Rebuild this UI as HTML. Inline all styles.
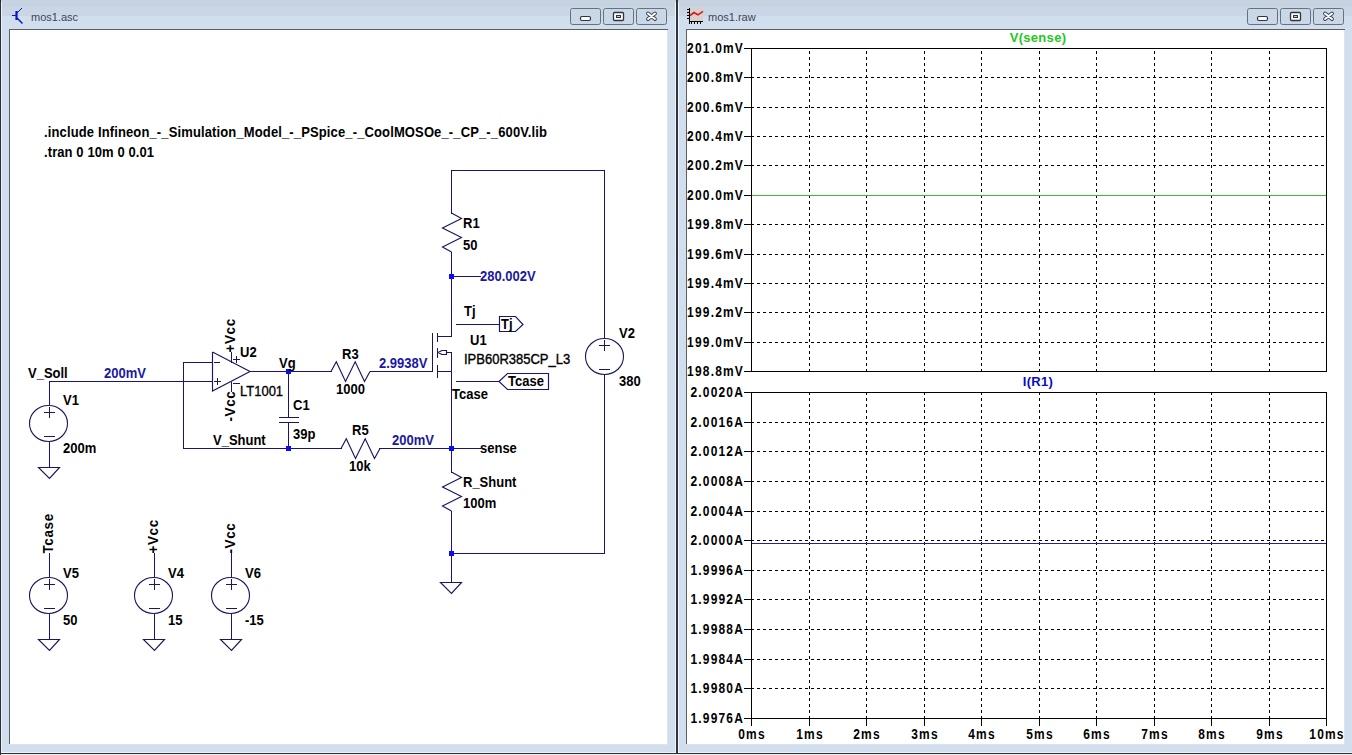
<!DOCTYPE html>
<html><head><meta charset="utf-8"><style>
html,body{margin:0;padding:0;background:#d0dcea;overflow:hidden}
svg{display:block}
text{font-family:'Liberation Sans', sans-serif}
</style></head><body>
<svg width="1352" height="755" viewBox="0 0 1352 755">
<defs><linearGradient id="fr" x1="0" y1="0" x2="0" y2="1"><stop offset="0" stop-color="#c6d1de"/><stop offset="0.25" stop-color="#c9d5e3"/><stop offset="0.55" stop-color="#cedae9"/><stop offset="1" stop-color="#d7e4f2"/></linearGradient></defs>
<rect x="0" y="0" width="1352" height="755" fill="#d1deed"/>
<rect x="0" y="0" width="1352" height="7" fill="#c8d3e1"/>
<rect x="0" y="7" width="1352" height="9" fill="#cad6e5"/>
<rect x="0" y="16" width="1352" height="13" fill="#d1deed"/>
<rect x="1" y="752" width="1351" height="1" fill="#eef4fa"/>
<rect x="0" y="754" width="1352" height="1" fill="#eceef2"/>
<rect x="1" y="2" width="1" height="751" fill="#eef4fa"/>
<rect x="675" y="2" width="1" height="751" fill="#eef4fa"/>
<rect x="678" y="2" width="1" height="751" fill="#eef4fa"/>
<rect x="0" y="0" width="1" height="755" fill="#2a2e36"/>
<rect x="676" y="0" width="2" height="754" fill="#2f333b"/>
<rect x="0" y="753" width="1352" height="1" fill="#2f333b"/>
<rect x="10" y="30" width="657" height="714" fill="#ffffff"/>
<rect x="9" y="29" width="659" height="1" fill="#5a5f66"/>
<rect x="9" y="29" width="1" height="715" fill="#5a5f66"/>
<rect x="667" y="30" width="1" height="715" fill="#dde3ea"/>
<rect x="9" y="744" width="659" height="1" fill="#dde3ea"/>
<rect x="687" y="30" width="657" height="714" fill="#ffffff"/>
<rect x="686" y="29" width="659" height="1" fill="#5a5f66"/>
<rect x="686" y="29" width="1" height="715" fill="#5a5f66"/>
<rect x="1344" y="30" width="1" height="715" fill="#dde3ea"/>
<rect x="686" y="744" width="659" height="1" fill="#dde3ea"/>
<rect x="570.5" y="8.5" width="30" height="16" rx="2" ry="2" fill="#cad7e7" stroke="#66717f" stroke-width="1"/>
<rect x="603.5" y="8.5" width="30" height="16" rx="2" ry="2" fill="#cad7e7" stroke="#66717f" stroke-width="1"/>
<rect x="636.5" y="8.5" width="30" height="16" rx="2" ry="2" fill="#cad7e7" stroke="#66717f" stroke-width="1"/>
<rect x="580.5" y="16.5" width="10" height="4" rx="1.5" fill="#ffffff" stroke="#2e3440" stroke-width="1.2"/>
<rect x="613.5" y="12.5" width="10" height="8" rx="1" fill="#ffffff" stroke="#2e3440" stroke-width="1.3"/>
<rect x="616.5" y="15.5" width="4" height="2" fill="#c8ccd2" stroke="#2e3440" stroke-width="1"/>
<path d="M648,13.5 L655,19 M655,13.5 L648,19" stroke="#3a4250" stroke-width="3.8" stroke-linecap="round"/>
<path d="M648,13.5 L655,19 M655,13.5 L648,19" stroke="#ffffff" stroke-width="2" stroke-linecap="round"/>
<rect x="1247.5" y="8.5" width="30" height="16" rx="2" ry="2" fill="#cad7e7" stroke="#66717f" stroke-width="1"/>
<rect x="1280.5" y="8.5" width="30" height="16" rx="2" ry="2" fill="#cad7e7" stroke="#66717f" stroke-width="1"/>
<rect x="1313.5" y="8.5" width="30" height="16" rx="2" ry="2" fill="#cad7e7" stroke="#66717f" stroke-width="1"/>
<rect x="1257.5" y="16.5" width="10" height="4" rx="1.5" fill="#ffffff" stroke="#2e3440" stroke-width="1.2"/>
<rect x="1290.5" y="12.5" width="10" height="8" rx="1" fill="#ffffff" stroke="#2e3440" stroke-width="1.3"/>
<rect x="1293.5" y="15.5" width="4" height="2" fill="#c8ccd2" stroke="#2e3440" stroke-width="1"/>
<path d="M1325,13.5 L1332,19 M1332,13.5 L1325,19" stroke="#3a4250" stroke-width="3.8" stroke-linecap="round"/>
<path d="M1325,13.5 L1332,19 M1332,13.5 L1325,19" stroke="#ffffff" stroke-width="2" stroke-linecap="round"/>
<g stroke="#0a14c8" fill="none"><path d="M12,15.5 L16,15.5" stroke-width="1"/><path d="M16.5,11 L16.5,20" stroke-width="2.2"/><path d="M17,13 L22,8" stroke-width="1"/><path d="M17,18 L22.5,23.5" stroke-width="1.4"/></g>
<text x="31" y="20.5" font-size="11" font-weight="normal" fill="#3a4656" text-anchor="start" >mos1.asc</text>
<rect x="690" y="8" width="13" height="13" fill="#d8d0cc"/>
<path d="M690,15.5 L694,12.5 L698,14.8 L703,11.3" stroke="#e01818" stroke-width="1.6" fill="none"/>
<rect x="689" y="8" width="1" height="16" fill="#000"/>
<rect x="689" y="21" width="14" height="1" fill="#000"/>
<rect x="687" y="9" width="2" height="1" fill="#000"/>
<rect x="687" y="12" width="2" height="1" fill="#000"/>
<rect x="687" y="15" width="2" height="1" fill="#000"/>
<rect x="687" y="18" width="2" height="1" fill="#000"/>
<rect x="691" y="22" width="1" height="2" fill="#000"/>
<rect x="694" y="22" width="1" height="2" fill="#000"/>
<rect x="697" y="22" width="1" height="2" fill="#000"/>
<rect x="700" y="22" width="1" height="2" fill="#000"/>
<text x="708" y="20.5" font-size="11" font-weight="normal" fill="#3a4656" text-anchor="start" >mos1.raw</text>
<path d="M809.5,51 L809.5,371" stroke="#000" stroke-width="1" stroke-dasharray="3,3"/>
<path d="M866.5,51 L866.5,371" stroke="#000" stroke-width="1" stroke-dasharray="3,3"/>
<path d="M924.5,51 L924.5,371" stroke="#000" stroke-width="1" stroke-dasharray="3,3"/>
<path d="M981.5,51 L981.5,371" stroke="#000" stroke-width="1" stroke-dasharray="3,3"/>
<path d="M1039.5,51 L1039.5,371" stroke="#000" stroke-width="1" stroke-dasharray="3,3"/>
<path d="M1096.5,51 L1096.5,371" stroke="#000" stroke-width="1" stroke-dasharray="3,3"/>
<path d="M1154.5,51 L1154.5,371" stroke="#000" stroke-width="1" stroke-dasharray="3,3"/>
<path d="M1211.5,51 L1211.5,371" stroke="#000" stroke-width="1" stroke-dasharray="3,3"/>
<path d="M1269.5,51 L1269.5,371" stroke="#000" stroke-width="1" stroke-dasharray="3,3"/>
<path d="M751,77.5 L1326,77.5" stroke="#000" stroke-width="1" stroke-dasharray="3,3"/>
<path d="M751,107.5 L1326,107.5" stroke="#000" stroke-width="1" stroke-dasharray="3,3"/>
<path d="M751,136.5 L1326,136.5" stroke="#000" stroke-width="1" stroke-dasharray="3,3"/>
<path d="M751,165.5 L1326,165.5" stroke="#000" stroke-width="1" stroke-dasharray="3,3"/>
<path d="M751,195.5 L1326,195.5" stroke="#000" stroke-width="1" stroke-dasharray="3,3"/>
<path d="M751,224.5 L1326,224.5" stroke="#000" stroke-width="1" stroke-dasharray="3,3"/>
<path d="M751,254.5 L1326,254.5" stroke="#000" stroke-width="1" stroke-dasharray="3,3"/>
<path d="M751,283.5 L1326,283.5" stroke="#000" stroke-width="1" stroke-dasharray="3,3"/>
<path d="M751,312.5 L1326,312.5" stroke="#000" stroke-width="1" stroke-dasharray="3,3"/>
<path d="M751,342.5 L1326,342.5" stroke="#000" stroke-width="1" stroke-dasharray="3,3"/>
<rect x="752" y="195" width="574" height="1" fill="#3cba3c"/>
<rect x="751" y="48" width="576" height="1" fill="#000"/>
<rect x="751" y="371" width="576" height="1" fill="#000"/>
<rect x="751" y="48" width="1" height="324" fill="#000"/>
<rect x="1326" y="48" width="1" height="324" fill="#000"/>
<rect x="744" y="48" width="7" height="1" fill="#000"/>
<text transform="translate(744,53) scale(0.92,1.08)" font-size="13" font-weight="bold" fill="#000" text-anchor="end" letter-spacing="1.3">201.0mV</text>
<rect x="744" y="77" width="7" height="1" fill="#000"/>
<text transform="translate(744,82) scale(0.92,1.08)" font-size="13" font-weight="bold" fill="#000" text-anchor="end" letter-spacing="1.3">200.8mV</text>
<rect x="744" y="107" width="7" height="1" fill="#000"/>
<text transform="translate(744,112) scale(0.92,1.08)" font-size="13" font-weight="bold" fill="#000" text-anchor="end" letter-spacing="1.3">200.6mV</text>
<rect x="744" y="136" width="7" height="1" fill="#000"/>
<text transform="translate(744,141) scale(0.92,1.08)" font-size="13" font-weight="bold" fill="#000" text-anchor="end" letter-spacing="1.3">200.4mV</text>
<rect x="744" y="165" width="7" height="1" fill="#000"/>
<text transform="translate(744,170) scale(0.92,1.08)" font-size="13" font-weight="bold" fill="#000" text-anchor="end" letter-spacing="1.3">200.2mV</text>
<rect x="744" y="195" width="7" height="1" fill="#000"/>
<text transform="translate(744,200) scale(0.92,1.08)" font-size="13" font-weight="bold" fill="#000" text-anchor="end" letter-spacing="1.3">200.0mV</text>
<rect x="744" y="224" width="7" height="1" fill="#000"/>
<text transform="translate(744,229) scale(0.92,1.08)" font-size="13" font-weight="bold" fill="#000" text-anchor="end" letter-spacing="1.3">199.8mV</text>
<rect x="744" y="254" width="7" height="1" fill="#000"/>
<text transform="translate(744,259) scale(0.92,1.08)" font-size="13" font-weight="bold" fill="#000" text-anchor="end" letter-spacing="1.3">199.6mV</text>
<rect x="744" y="283" width="7" height="1" fill="#000"/>
<text transform="translate(744,288) scale(0.92,1.08)" font-size="13" font-weight="bold" fill="#000" text-anchor="end" letter-spacing="1.3">199.4mV</text>
<rect x="744" y="312" width="7" height="1" fill="#000"/>
<text transform="translate(744,317) scale(0.92,1.08)" font-size="13" font-weight="bold" fill="#000" text-anchor="end" letter-spacing="1.3">199.2mV</text>
<rect x="744" y="342" width="7" height="1" fill="#000"/>
<text transform="translate(744,347) scale(0.92,1.08)" font-size="13" font-weight="bold" fill="#000" text-anchor="end" letter-spacing="1.3">199.0mV</text>
<rect x="744" y="371" width="7" height="1" fill="#000"/>
<text transform="translate(744,376) scale(0.92,1.08)" font-size="13" font-weight="bold" fill="#000" text-anchor="end" letter-spacing="1.3">198.8mV</text>
<text x="1038.0" y="42" font-size="13" font-weight="bold" fill="#1ec81e" text-anchor="middle" letter-spacing="0.3">V(sense)</text>
<path d="M809.5,392 L809.5,718" stroke="#000" stroke-width="1" stroke-dasharray="3,3"/>
<path d="M866.5,392 L866.5,718" stroke="#000" stroke-width="1" stroke-dasharray="3,3"/>
<path d="M924.5,392 L924.5,718" stroke="#000" stroke-width="1" stroke-dasharray="3,3"/>
<path d="M981.5,392 L981.5,718" stroke="#000" stroke-width="1" stroke-dasharray="3,3"/>
<path d="M1039.5,392 L1039.5,718" stroke="#000" stroke-width="1" stroke-dasharray="3,3"/>
<path d="M1096.5,392 L1096.5,718" stroke="#000" stroke-width="1" stroke-dasharray="3,3"/>
<path d="M1154.5,392 L1154.5,718" stroke="#000" stroke-width="1" stroke-dasharray="3,3"/>
<path d="M1211.5,392 L1211.5,718" stroke="#000" stroke-width="1" stroke-dasharray="3,3"/>
<path d="M1269.5,392 L1269.5,718" stroke="#000" stroke-width="1" stroke-dasharray="3,3"/>
<path d="M751,422.5 L1326,422.5" stroke="#000" stroke-width="1" stroke-dasharray="3,3"/>
<path d="M751,451.5 L1326,451.5" stroke="#000" stroke-width="1" stroke-dasharray="3,3"/>
<path d="M751,481.5 L1326,481.5" stroke="#000" stroke-width="1" stroke-dasharray="3,3"/>
<path d="M751,511.5 L1326,511.5" stroke="#000" stroke-width="1" stroke-dasharray="3,3"/>
<path d="M751,540.5 L1326,540.5" stroke="#000" stroke-width="1" stroke-dasharray="3,3"/>
<path d="M751,570.5 L1326,570.5" stroke="#000" stroke-width="1" stroke-dasharray="3,3"/>
<path d="M751,599.5 L1326,599.5" stroke="#000" stroke-width="1" stroke-dasharray="3,3"/>
<path d="M751,629.5 L1326,629.5" stroke="#000" stroke-width="1" stroke-dasharray="3,3"/>
<path d="M751,659.5 L1326,659.5" stroke="#000" stroke-width="1" stroke-dasharray="3,3"/>
<path d="M751,688.5 L1326,688.5" stroke="#000" stroke-width="1" stroke-dasharray="3,3"/>
<rect x="752" y="543" width="574" height="1" fill="#24249a"/>
<rect x="751" y="392" width="576" height="1" fill="#000"/>
<rect x="751" y="718" width="576" height="1" fill="#000"/>
<rect x="751" y="392" width="1" height="327" fill="#000"/>
<rect x="1326" y="392" width="1" height="327" fill="#000"/>
<rect x="744" y="392" width="7" height="1" fill="#000"/>
<text transform="translate(744,397) scale(0.92,1.08)" font-size="13" font-weight="bold" fill="#000" text-anchor="end" letter-spacing="1.3">2.0020A</text>
<rect x="744" y="422" width="7" height="1" fill="#000"/>
<text transform="translate(744,427) scale(0.92,1.08)" font-size="13" font-weight="bold" fill="#000" text-anchor="end" letter-spacing="1.3">2.0016A</text>
<rect x="744" y="451" width="7" height="1" fill="#000"/>
<text transform="translate(744,456) scale(0.92,1.08)" font-size="13" font-weight="bold" fill="#000" text-anchor="end" letter-spacing="1.3">2.0012A</text>
<rect x="744" y="481" width="7" height="1" fill="#000"/>
<text transform="translate(744,486) scale(0.92,1.08)" font-size="13" font-weight="bold" fill="#000" text-anchor="end" letter-spacing="1.3">2.0008A</text>
<rect x="744" y="511" width="7" height="1" fill="#000"/>
<text transform="translate(744,516) scale(0.92,1.08)" font-size="13" font-weight="bold" fill="#000" text-anchor="end" letter-spacing="1.3">2.0004A</text>
<rect x="744" y="540" width="7" height="1" fill="#000"/>
<text transform="translate(744,545) scale(0.92,1.08)" font-size="13" font-weight="bold" fill="#000" text-anchor="end" letter-spacing="1.3">2.0000A</text>
<rect x="744" y="570" width="7" height="1" fill="#000"/>
<text transform="translate(744,575) scale(0.92,1.08)" font-size="13" font-weight="bold" fill="#000" text-anchor="end" letter-spacing="1.3">1.9996A</text>
<rect x="744" y="599" width="7" height="1" fill="#000"/>
<text transform="translate(744,604) scale(0.92,1.08)" font-size="13" font-weight="bold" fill="#000" text-anchor="end" letter-spacing="1.3">1.9992A</text>
<rect x="744" y="629" width="7" height="1" fill="#000"/>
<text transform="translate(744,634) scale(0.92,1.08)" font-size="13" font-weight="bold" fill="#000" text-anchor="end" letter-spacing="1.3">1.9988A</text>
<rect x="744" y="659" width="7" height="1" fill="#000"/>
<text transform="translate(744,664) scale(0.92,1.08)" font-size="13" font-weight="bold" fill="#000" text-anchor="end" letter-spacing="1.3">1.9984A</text>
<rect x="744" y="688" width="7" height="1" fill="#000"/>
<text transform="translate(744,693) scale(0.92,1.08)" font-size="13" font-weight="bold" fill="#000" text-anchor="end" letter-spacing="1.3">1.9980A</text>
<rect x="744" y="718" width="7" height="1" fill="#000"/>
<text transform="translate(744,723) scale(0.92,1.08)" font-size="13" font-weight="bold" fill="#000" text-anchor="end" letter-spacing="1.3">1.9976A</text>
<text x="1038.0" y="386" font-size="13" font-weight="bold" fill="#0a0ac8" text-anchor="middle" letter-spacing="0.3">I(R1)</text>
<rect x="751" y="719" width="1" height="7" fill="#000"/>
<text transform="translate(752,739) scale(0.92,1.08)" font-size="13" font-weight="bold" fill="#000" text-anchor="middle" letter-spacing="1.3">0ms</text>
<rect x="809" y="719" width="1" height="7" fill="#000"/>
<text transform="translate(810,739) scale(0.92,1.08)" font-size="13" font-weight="bold" fill="#000" text-anchor="middle" letter-spacing="1.3">1ms</text>
<rect x="866" y="719" width="1" height="7" fill="#000"/>
<text transform="translate(867,739) scale(0.92,1.08)" font-size="13" font-weight="bold" fill="#000" text-anchor="middle" letter-spacing="1.3">2ms</text>
<rect x="924" y="719" width="1" height="7" fill="#000"/>
<text transform="translate(925,739) scale(0.92,1.08)" font-size="13" font-weight="bold" fill="#000" text-anchor="middle" letter-spacing="1.3">3ms</text>
<rect x="981" y="719" width="1" height="7" fill="#000"/>
<text transform="translate(982,739) scale(0.92,1.08)" font-size="13" font-weight="bold" fill="#000" text-anchor="middle" letter-spacing="1.3">4ms</text>
<rect x="1039" y="719" width="1" height="7" fill="#000"/>
<text transform="translate(1040,739) scale(0.92,1.08)" font-size="13" font-weight="bold" fill="#000" text-anchor="middle" letter-spacing="1.3">5ms</text>
<rect x="1096" y="719" width="1" height="7" fill="#000"/>
<text transform="translate(1097,739) scale(0.92,1.08)" font-size="13" font-weight="bold" fill="#000" text-anchor="middle" letter-spacing="1.3">6ms</text>
<rect x="1154" y="719" width="1" height="7" fill="#000"/>
<text transform="translate(1155,739) scale(0.92,1.08)" font-size="13" font-weight="bold" fill="#000" text-anchor="middle" letter-spacing="1.3">7ms</text>
<rect x="1211" y="719" width="1" height="7" fill="#000"/>
<text transform="translate(1212,739) scale(0.92,1.08)" font-size="13" font-weight="bold" fill="#000" text-anchor="middle" letter-spacing="1.3">8ms</text>
<rect x="1269" y="719" width="1" height="7" fill="#000"/>
<text transform="translate(1270,739) scale(0.92,1.08)" font-size="13" font-weight="bold" fill="#000" text-anchor="middle" letter-spacing="1.3">9ms</text>
<rect x="1326" y="719" width="1" height="7" fill="#000"/>
<text transform="translate(1327,739) scale(0.92,1.08)" font-size="13" font-weight="bold" fill="#000" text-anchor="middle" letter-spacing="1.3">10ms</text>
<text transform="translate(44,137) scale(1,1.07)" font-size="13" font-weight="bold" fill="#000" text-anchor="start" letter-spacing="0.135">.include Infineon_-_Simulation_Model_-_PSpice_-_CoolMOSOe_-_CP_-_600V.lib</text>
<text transform="translate(44,156.5) scale(1,1.07)" font-size="13" font-weight="bold" fill="#000" text-anchor="start" letter-spacing="0.1">.tran 0 10m 0 0.01</text>
<rect x="451" y="170" width="154" height="1" fill="#1a1478"/>
<rect x="451" y="170" width="1" height="44" fill="#1a1478"/>
<rect x="451" y="252" width="1" height="85" fill="#1a1478"/>
<rect x="451" y="276" width="30" height="1" fill="#1a1478"/>
<path d="M451.5,213 L461.5,218.5 L442.5,228 L461.5,237.5 L442.5,247 L451.5,252" fill="none" stroke="#1c165e" stroke-width="1.15"/>
<rect x="604" y="170" width="1" height="168" fill="#1a1478"/>
<rect x="604" y="314" width="1" height="24" fill="#1a1478"/>
<ellipse cx="604.5" cy="356.5" rx="19" ry="18" fill="none" stroke="#1c165e" stroke-width="1.1"/>
<rect x="599" y="345" width="11" height="1" fill="#1c165e"/>
<rect x="604" y="340" width="1" height="11" fill="#1c165e"/>
<rect x="599" y="369" width="11" height="1" fill="#1c165e"/>
<rect x="604" y="375" width="1" height="26" fill="#1a1478"/>
<rect x="604" y="375" width="1" height="179" fill="#1a1478"/>
<rect x="451" y="553" width="154" height="1" fill="#1a1478"/>
<rect x="451" y="352" width="1" height="121" fill="#1a1478"/>
<path d="M451.5,472 L461.5,477.5 L442.5,487 L461.5,496.5 L442.5,506 L451.5,511" fill="none" stroke="#1c165e" stroke-width="1.15"/>
<rect x="451" y="511" width="1" height="72" fill="#1a1478"/>
<path d="M440.5,582.5 L461.5,582.5 L451.5,593.5 Z" fill="none" stroke="#1c165e" stroke-width="1.15"/>
<rect x="451" y="448" width="30" height="1" fill="#1a1478"/>
<rect x="437" y="336" width="15" height="1" fill="#1c165e"/>
<rect x="432" y="333" width="1" height="39" fill="#1c165e"/>
<rect x="437" y="333" width="1" height="9" fill="#1c165e"/>
<rect x="437" y="348" width="1" height="10" fill="#1c165e"/>
<rect x="437" y="365" width="1" height="13" fill="#1c165e"/>
<rect x="437" y="371" width="15" height="1" fill="#1c165e"/>
<path d="M438,352.5 L442,350.5 L446.5,350.5 L446.5,354.5 L442,354.5 L438,352.5" fill="none" stroke="#1c165e" stroke-width="1.15"/>
<rect x="446" y="352" width="6" height="1" fill="#1c165e"/>
<rect x="370" y="371" width="63" height="1" fill="#1a1478"/>
<rect x="456" y="324" width="44" height="1" fill="#1a1478"/>
<path d="M499.5,316.5 L515.5,316.5 L523,324.5 L515.5,331.5 L499.5,331.5 Z" fill="none" stroke="#1a1478" stroke-width="1.15"/>
<rect x="456" y="381" width="44" height="1" fill="#1a1478"/>
<path d="M499,381.5 L507.5,373.5 L548.5,373.5 L548.5,389.5 L507.5,389.5 Z" fill="none" stroke="#1a1478" stroke-width="1.15"/>
<rect x="250" y="371" width="82" height="1" fill="#1a1478"/>
<path d="M331,371.5 L336.3,361.8 L345.5,381.5 L355.2,361.8 L364.5,381.5 L370,371.5" fill="none" stroke="#1c165e" stroke-width="1.15"/>
<rect x="288" y="371" width="1" height="47" fill="#1a1478"/>
<rect x="279" y="417" width="20" height="1" fill="#1c165e"/>
<rect x="279" y="422" width="20" height="1" fill="#1c165e"/>
<rect x="288" y="422" width="1" height="27" fill="#1a1478"/>
<rect x="183" y="448" width="159" height="1" fill="#1a1478"/>
<path d="M341,448.5 L346.3,438.8 L355.5,458.5 L365.2,438.8 L374.5,458.5 L380,448.5" fill="none" stroke="#1c165e" stroke-width="1.15"/>
<rect x="379" y="448" width="73" height="1" fill="#1a1478"/>
<rect x="183" y="362" width="1" height="87" fill="#1a1478"/>
<rect x="183" y="362" width="30" height="1" fill="#1a1478"/>
<rect x="49" y="381" width="164" height="1" fill="#1a1478"/>
<path d="M212.5,352 L250,371.5 L212.5,391 L212.5,352" fill="none" stroke="#1c165e" stroke-width="1.15"/>
<rect x="214" y="362" width="6" height="1" fill="#1c165e"/>
<rect x="214" y="381" width="7" height="1" fill="#1c165e"/>
<rect x="217" y="378" width="1" height="7" fill="#1c165e"/>
<rect x="231" y="352" width="1" height="11" fill="#1c165e"/>
<rect x="233" y="359" width="7" height="1" fill="#1c165e"/>
<rect x="236" y="356" width="1" height="7" fill="#1c165e"/>
<rect x="231" y="382" width="1" height="10" fill="#1c165e"/>
<rect x="233" y="383" width="7" height="1" fill="#1c165e"/>
<rect x="49" y="381" width="1" height="24" fill="#1a1478"/>
<ellipse cx="48.5" cy="423.5" rx="19" ry="18" fill="none" stroke="#1c165e" stroke-width="1.1"/>
<rect x="44" y="412" width="11" height="1" fill="#1c165e"/>
<rect x="49" y="407" width="1" height="11" fill="#1c165e"/>
<rect x="44" y="436" width="11" height="1" fill="#1c165e"/>
<rect x="49" y="442" width="1" height="26" fill="#1a1478"/>
<path d="M38.5,467.5 L59.5,467.5 L49.5,478.5 Z" fill="none" stroke="#1c165e" stroke-width="1.15"/>
<rect x="49" y="553" width="1" height="24" fill="#1a1478"/>
<ellipse cx="48.5" cy="595.5" rx="19" ry="18" fill="none" stroke="#1c165e" stroke-width="1.1"/>
<rect x="44" y="584" width="11" height="1" fill="#1c165e"/>
<rect x="49" y="579" width="1" height="11" fill="#1c165e"/>
<rect x="44" y="608" width="11" height="1" fill="#1c165e"/>
<rect x="49" y="614" width="1" height="26" fill="#1a1478"/>
<path d="M38.5,639.5 L59.5,639.5 L49.5,650.5 Z" fill="none" stroke="#1c165e" stroke-width="1.15"/>
<rect x="154" y="553" width="1" height="24" fill="#1a1478"/>
<ellipse cx="153.5" cy="595.5" rx="19" ry="18" fill="none" stroke="#1c165e" stroke-width="1.1"/>
<rect x="149" y="584" width="11" height="1" fill="#1c165e"/>
<rect x="154" y="579" width="1" height="11" fill="#1c165e"/>
<rect x="149" y="608" width="11" height="1" fill="#1c165e"/>
<rect x="154" y="614" width="1" height="26" fill="#1a1478"/>
<path d="M143.5,639.5 L164.5,639.5 L154.5,650.5 Z" fill="none" stroke="#1c165e" stroke-width="1.15"/>
<rect x="231" y="553" width="1" height="24" fill="#1a1478"/>
<ellipse cx="230.5" cy="595.5" rx="19" ry="18" fill="none" stroke="#1c165e" stroke-width="1.1"/>
<rect x="226" y="584" width="11" height="1" fill="#1c165e"/>
<rect x="231" y="579" width="1" height="11" fill="#1c165e"/>
<rect x="226" y="608" width="11" height="1" fill="#1c165e"/>
<rect x="231" y="614" width="1" height="26" fill="#1a1478"/>
<path d="M220.5,639.5 L241.5,639.5 L231.5,650.5 Z" fill="none" stroke="#1c165e" stroke-width="1.15"/>
<rect x="449" y="274" width="5" height="5" fill="#0c0cf0"/>
<rect x="449" y="551" width="5" height="5" fill="#0c0cf0"/>
<rect x="449" y="446" width="5" height="5" fill="#0c0cf0"/>
<rect x="286" y="369" width="5" height="5" fill="#0c0cf0"/>
<rect x="286" y="446" width="5" height="5" fill="#0c0cf0"/>
<text transform="translate(463,228) scale(1,1.07)" font-size="13" font-weight="bold" fill="#000" text-anchor="start" >R1</text>
<text transform="translate(463,250) scale(1,1.07)" font-size="13" font-weight="bold" fill="#000" text-anchor="start" >50</text>
<text transform="translate(480,281) scale(1,1.07)" font-size="13" font-weight="bold" fill="#1a18a0" text-anchor="start" >280.002V</text>
<text transform="translate(464,316) scale(1,1.07)" font-size="13" font-weight="bold" fill="#000" text-anchor="start" >Tj</text>
<text transform="translate(501,329) scale(1,1.07)" font-size="13" font-weight="bold" fill="#000" text-anchor="start" >Tj</text>
<text transform="translate(470,345) scale(1,1.07)" font-size="13" font-weight="bold" fill="#000" text-anchor="start" >U1</text>
<text transform="translate(464,364) scale(1,1.07)" font-size="13" font-weight="normal" fill="#000" text-anchor="start" stroke="#000" stroke-width="0.35">IPB60R385CP_L3</text>
<text transform="translate(508,386) scale(1,1.07)" font-size="13" font-weight="bold" fill="#000" text-anchor="start" >Tcase</text>
<text transform="translate(452,399) scale(1,1.07)" font-size="13" font-weight="bold" fill="#000" text-anchor="start" >Tcase</text>
<text transform="translate(619,338) scale(1,1.07)" font-size="13" font-weight="bold" fill="#000" text-anchor="start" >V2</text>
<text transform="translate(619,386) scale(1,1.07)" font-size="13" font-weight="bold" fill="#000" text-anchor="start" >380</text>
<text transform="translate(28,378) scale(1,1.07)" font-size="13" font-weight="bold" fill="#000" text-anchor="start" >V_Soll</text>
<text transform="translate(104,378) scale(1,1.07)" font-size="13" font-weight="bold" fill="#1a18a0" text-anchor="start" >200mV</text>
<text transform="translate(63,405) scale(1,1.07)" font-size="13" font-weight="bold" fill="#000" text-anchor="start" >V1</text>
<text transform="translate(63,453) scale(1,1.07)" font-size="13" font-weight="bold" fill="#000" text-anchor="start" >200m</text>
<text transform="translate(240,357) scale(1,1.07)" font-size="13" font-weight="bold" fill="#000" text-anchor="start" >U2</text>
<text transform="translate(240,396) scale(1,1.07)" font-size="13" font-weight="normal" fill="#000" text-anchor="start" stroke="#000" stroke-width="0.3">LT1001</text>
<text transform="translate(279,368) scale(1,1.07)" font-size="13" font-weight="bold" fill="#000" text-anchor="start" >Vg</text>
<text transform="translate(342,359) scale(1,1.07)" font-size="13" font-weight="bold" fill="#000" text-anchor="start" >R3</text>
<text transform="translate(336,394) scale(1,1.07)" font-size="13" font-weight="bold" fill="#000" text-anchor="start" >1000</text>
<text transform="translate(379,368) scale(1,1.07)" font-size="13" font-weight="bold" fill="#1a18a0" text-anchor="start" >2.9938V</text>
<text transform="translate(293,410) scale(1,1.07)" font-size="13" font-weight="bold" fill="#000" text-anchor="start" >C1</text>
<text transform="translate(293,439) scale(1,1.07)" font-size="13" font-weight="bold" fill="#000" text-anchor="start" >39p</text>
<text transform="translate(213,445) scale(1,1.07)" font-size="13" font-weight="bold" fill="#000" text-anchor="start" >V_Shunt</text>
<text transform="translate(352,435) scale(1,1.07)" font-size="13" font-weight="bold" fill="#000" text-anchor="start" >R5</text>
<text transform="translate(349,471) scale(1,1.07)" font-size="13" font-weight="bold" fill="#000" text-anchor="start" >10k</text>
<text transform="translate(392,445) scale(1,1.07)" font-size="13" font-weight="bold" fill="#1a18a0" text-anchor="start" >200mV</text>
<text transform="translate(480,453) scale(1,1.07)" font-size="13" font-weight="bold" fill="#000" text-anchor="start" >sense</text>
<text transform="translate(463,487) scale(1,1.07)" font-size="13" font-weight="bold" fill="#000" text-anchor="start" >R_Shunt</text>
<text transform="translate(463,508) scale(1,1.07)" font-size="13" font-weight="bold" fill="#000" text-anchor="start" >100m</text>
<text transform="translate(63,578) scale(1,1.07)" font-size="13" font-weight="bold" fill="#000" text-anchor="start" >V5</text>
<text transform="translate(63,625) scale(1,1.07)" font-size="13" font-weight="bold" fill="#000" text-anchor="start" >50</text>
<text transform="translate(168,578) scale(1,1.07)" font-size="13" font-weight="bold" fill="#000" text-anchor="start" >V4</text>
<text transform="translate(168,625) scale(1,1.07)" font-size="13" font-weight="bold" fill="#000" text-anchor="start" >15</text>
<text transform="translate(245,578) scale(1,1.07)" font-size="13" font-weight="bold" fill="#000" text-anchor="start" >V6</text>
<text transform="translate(245,625) scale(1,1.07)" font-size="13" font-weight="bold" fill="#000" text-anchor="start" >-15</text>
<text x="0" y="0" font-size="13.5" font-weight="bold" fill="#000" text-anchor="start" letter-spacing="0.6" transform="translate(234.5,352.5) rotate(-90) scale(1,1.07)">+Vcc</text>
<text x="0" y="0" font-size="13.5" font-weight="bold" fill="#000" text-anchor="start" letter-spacing="0.6" transform="translate(234.5,421.5) rotate(-90) scale(1,1.07)">-Vcc</text>
<text x="0" y="0" font-size="13.5" font-weight="bold" fill="#000" text-anchor="start" letter-spacing="0.6" transform="translate(52.5,553.5) rotate(-90) scale(1,1.07)">Tcase</text>
<text x="0" y="0" font-size="13.5" font-weight="bold" fill="#000" text-anchor="start" letter-spacing="0.6" transform="translate(157.5,553.5) rotate(-90) scale(1,1.07)">+Vcc</text>
<text x="0" y="0" font-size="13.5" font-weight="bold" fill="#000" text-anchor="start" letter-spacing="0.6" transform="translate(234.5,553.5) rotate(-90) scale(1,1.07)">-Vcc</text>
</svg>
</body></html>
